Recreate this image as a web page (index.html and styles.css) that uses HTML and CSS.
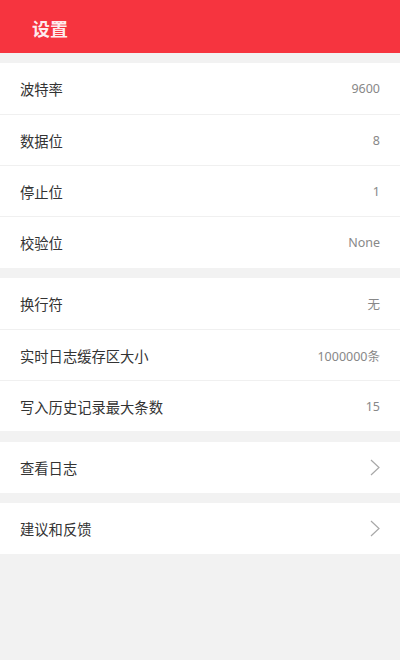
FILE: index.html
```html
<!DOCTYPE html>
<html lang="zh-CN">
<head>
<meta charset="utf-8">
<title>设置</title>
<link rel="stylesheet" href="styles.css">
</head>
<body>
<header class="topbar"><h1 class="title">设置</h1></header>
<main>
  <section class="group group-serial">
    <div class="row"><span class="label">波特率</span><span class="value">9600</span></div>
    <div class="row"><span class="label">数据位</span><span class="value">8</span></div>
    <div class="row"><span class="label">停止位</span><span class="value">1</span></div>
    <div class="row"><span class="label">校验位</span><span class="value">None</span></div>
  </section>
  <section class="group">
    <div class="row"><span class="label">换行符</span><span class="value">无</span></div>
    <div class="row"><span class="label">实时日志缓存区大小</span><span class="value">1000000条</span></div>
    <div class="row"><span class="label">写入历史记录最大条数</span><span class="value">15</span></div>
  </section>
  <section class="group group-log">
    <div class="row"><span class="label">查看日志</span>
      <svg class="chev" width="10" height="17" viewBox="0 0 10 17"><polyline points="1,1 9,8.5 1,16" fill="none" stroke="#a8a8a8" stroke-width="1.2"/></svg>
    </div>
  </section>
  <section class="group">
    <div class="row"><span class="label">建议和反馈</span>
      <svg class="chev" width="10" height="17" viewBox="0 0 10 17"><polyline points="1,1 9,8.5 1,16" fill="none" stroke="#a8a8a8" stroke-width="1.2"/></svg>
    </div>
  </section>
</main>
</body>
</html>
```
FILE: styles.css
```css
html, body {
  margin: 0;
  padding: 0;
}
body {
  background: #f2f2f2;
  font-family: "Noto Sans CJK SC", "Noto Sans", sans-serif;
  min-height: 660px;
}
.topbar {
  height: 53px;
  background: #f6343f;
  display: flex;
  align-items: center;
  padding-left: 32px;
}
.title {
  margin: 0;
  font-size: 18px;
  font-weight: 700;
  color: rgba(255,255,255,0.92);
  line-height: 1;
  padding-top: 2px;
}
.group {
  background: #fff;
  margin-top: 10px;
}
.group-serial {
  padding-bottom: 1px;
}
.group-log {
  margin-top: 11px;
}
.row {
  height: 51px;
  box-sizing: border-box;
  display: flex;
  align-items: center;
  justify-content: space-between;
  padding: 0 20px;
}
.row + .row {
  border-top: 1px solid #f0f0f0;
}
.label {
  font-size: 14.3px;
  color: #333;
}
.value {
  font-family: "Noto Sans", "Noto Sans CJK SC", sans-serif;
  font-size: 12.5px;
  color: #888;
}
.chev {
  display: block;
}
```
